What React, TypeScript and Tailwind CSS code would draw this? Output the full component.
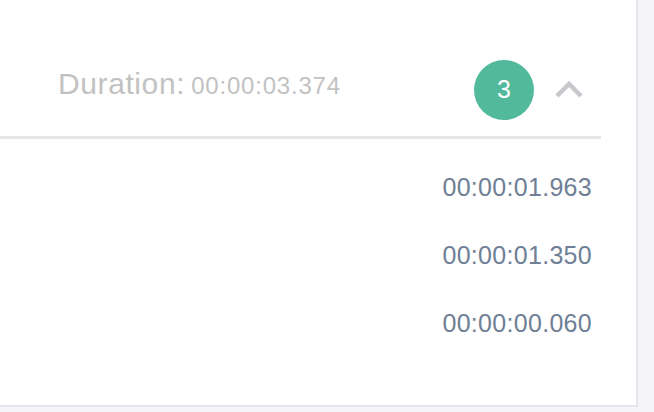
import React from "react";

const times = ["00:00:01.963", "00:00:01.350", "00:00:00.060"];

export default function App() {
  return (
    <div
      className="w-[654px] h-[412px] bg-[#f5f5f7] overflow-hidden"
      style={{ fontFamily: '"Liberation Sans", Arial, sans-serif' }}
    >
      <div className="w-[638px] h-[407px] bg-white border-r-2 border-b-2 border-[#e6e6ec]">
        <div className="h-[136px] pt-[44px] flex items-center pl-[58px]">
          <div className="flex items-baseline text-[#c2c2c2] leading-none -mt-[12px]">
            <span className="text-[30px] tracking-[0.6px]">Duration:</span>
            <span className="text-[24px] tracking-[0.8px] ml-[6px]">00:00:03.374</span>
          </div>
          <div className="ml-auto flex items-center">
            <div className="w-[60px] h-[60px] rounded-full bg-[#53b99b] flex items-center justify-center text-white text-[25px]">
              3
            </div>
            <svg
              width="30"
              height="20"
              viewBox="0 0 30 20"
              className="ml-[20px] mr-[52px]"
            >
              <polyline
                points="3,16 15,4 27,16"
                fill="none"
                stroke="#c8c8cc"
                strokeWidth="4.5"
              />
            </svg>
          </div>
        </div>
        <div className="w-[601px] h-[3px] bg-[#e6e6ea]" />
        <div className="flex flex-col items-end pr-[44px] pt-[15px]">
          {times.map((t) => (
            <div
              key={t}
              className="h-[68px] flex items-center text-[25px] tracking-[0.3px] text-[#6f8096]"
            >
              {t}
            </div>
          ))}
        </div>
      </div>
    </div>
  );
}
